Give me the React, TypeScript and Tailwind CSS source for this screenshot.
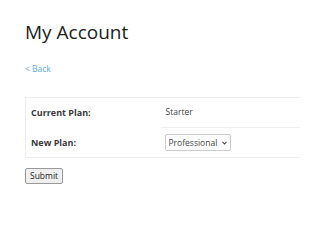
export default function App() {
  return (
    <div className="h-[243px] w-[300px] overflow-hidden bg-white pl-[25px] pt-[20px] font-['Open_Sans',sans-serif] text-[#333]">
      <h1 className="text-[19px] leading-[24px] font-normal text-[#222]">My Account</h1>

      <a href="#" className="mt-[19px] block text-[8.5px] leading-[12px] text-[#5aaee6]">
        &lt; Back
      </a>

      <table className="mt-[22px] w-[400px] border border-[#eee] text-[8.5px]">
        <tbody>
          <tr>
            <th className="h-[30px] w-[135px] px-[5px] text-left text-[9px] font-bold text-[#3a3a3a]">Current Plan:</th>
            <td className="px-[5px] text-[#444]">Starter</td>
          </tr>
          <tr>
            <th className="h-[30px] px-[5px] text-left text-[9px] font-bold text-[#3a3a3a]">New Plan:</th>
            <td className="border-t border-[#eee] px-[4px]">
              <div className="relative inline-block">
                <select
                  className="h-[17px] w-[66px] appearance-none rounded-[2px] border border-[#ccc] bg-white pl-[3px] pr-[9px] text-[8.5px] leading-[15px] text-[#444]"
                  defaultValue="Professional"
                >
                  <option>Starter</option>
                  <option>Professional</option>
                </select>
                <svg
                  className="pointer-events-none absolute right-[4px] top-[7px]"
                  width="5"
                  height="4"
                  viewBox="0 0 5 4"
                  fill="none"
                >
                  <path d="M0.5 0.8 L2.5 3 L4.5 0.8" stroke="#444" strokeWidth="1.1" />
                </svg>
              </div>
            </td>
          </tr>
        </tbody>
      </table>

      <button className="mt-[10px] h-[16px] rounded-[2px] border border-[#999] bg-[#efefef] px-[4px] text-[8.5px] leading-[12px] text-[#222]">
        Submit
      </button>
    </div>
  );
}
